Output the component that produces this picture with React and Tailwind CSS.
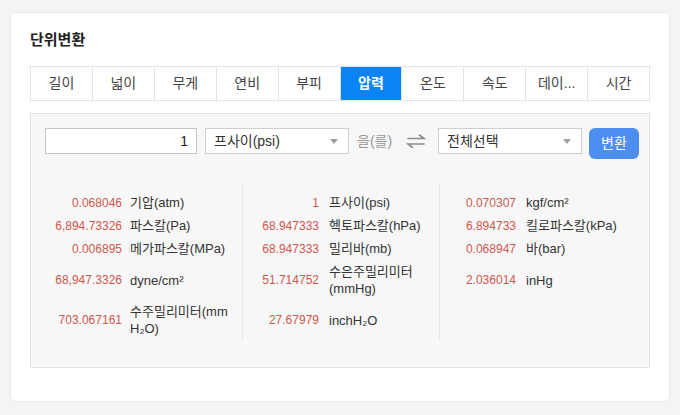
import React, { useState } from 'react';

// --- DATA ---
const TABS = ['길이', '넓이', '무게', '연비', '부피', '압력', '온도', '속도', '데이...', '시간'];

const ROW_HEIGHTS = ['h-[23px]', 'h-[23px]', 'h-[23px]', 'h-[40px]', 'h-[40px]'];

const COLUMNS = [
    [
        { value: '0.068046', label: '기압(atm)' },
        { value: '6,894.73326', label: '파스칼(Pa)' },
        { value: '0.006895', label: '메가파스칼(MPa)' },
        { value: '68,947.3326', label: 'dyne/cm²' },
        { value: '703.067161', label: '수주밀리미터(mm H₂O)' },
    ],
    [
        { value: '1', label: '프사이(psi)' },
        { value: '68.947333', label: '헥토파스칼(hPa)' },
        { value: '68.947333', label: '밀리바(mb)' },
        { value: '51.714752', label: '수은주밀리미터(mmHg)' },
        { value: '27.67979', label: 'inchH₂O' },
    ],
    [
        { value: '0.070307', label: 'kgf/cm²' },
        { value: '6.894733', label: '킬로파스칼(kPa)' },
        { value: '0.068947', label: '바(bar)' },
        { value: '2.036014', label: 'inHg' },
    ],
];

// --- HELPER COMPONENTS ---
const Caret = () => (
    <svg width="8" height="5" viewBox="0 0 8 5" className="shrink-0">
        <path d="M0 0h8L4 5z" fill="#a0a0a0" />
    </svg>
);

const SelectBox = ({ label }) => (
    <div className="w-[144px] h-[26px] shrink-0 bg-white border border-[#cfcfcf] flex items-center justify-between pl-2 pr-2.5 text-[14px] text-[#333]">
        <span>{label}</span>
        <Caret />
    </div>
);

const SwapIcon = () => (
    <svg width="20" height="14" viewBox="0 0 20 14" fill="none" stroke="#8a8a8a" strokeWidth="1.6" strokeLinecap="round">
        <path d="M2 4.5h16L13.5 1" />
        <path d="M18 10H2l4.5 3.5" />
    </svg>
);

const ResultColumn = ({ items, divider }) => (
    <div className={`flex flex-col pt-2 ${divider ? 'border-l border-[#e6e6e6]' : ''} ${divider === 'last' ? 'flex-1' : 'w-[197px]'}`}>
        {ROW_HEIGHTS.map((h, i) => {
            const item = items[i];
            return (
                <div key={i} className={`flex items-center ${h}`}>
                    {item && (
                        <>
                            <span className={`${divider ? 'w-[76px]' : 'w-[77px]'} shrink-0 text-right text-[12px] text-[#d0574e]`}>
                                {item.value}
                            </span>
                            <span className={`flex-1 ${divider ? 'pl-2.5' : 'pl-2'} pr-2 text-[13px] leading-[17px] text-[#333]`}>
                                {item.label}
                            </span>
                        </>
                    )}
                </div>
            );
        })}
    </div>
);

// --- MAIN ---
const App = () => {
    const [active, setActive] = useState(5);

    return (
        <div
            className="w-[692px] h-[415px] bg-white overflow-hidden"
            style={{ fontFamily: '"Liberation Sans", "Noto Sans CJK KR", Arial, sans-serif' }}
        >
            <div className="w-[680px] h-full bg-[#f3f4f6] pt-3 pl-[10px]">
                {/* Card */}
                <div className="w-[660px] h-[390px] bg-white border border-[#e9e9e9] rounded-md px-[19px] pt-[17px]">
                    <h2 className="text-[15px] leading-5 font-bold text-[#222] mb-4">단위변환</h2>

                    {/* Tabs */}
                    <div className="flex border-l border-t border-[#e3e3e3]">
                        {TABS.map((t, i) => (
                            <button
                                key={t}
                                onClick={() => setActive(i)}
                                className={`w-[62px] h-[34px] border-r border-b border-[#e3e3e3] text-[14px] flex items-center justify-center ${
                                    active === i ? 'bg-[#0a84f5] text-white font-bold border-[#0a84f5]' : 'bg-white text-[#444]'
                                }`}
                            >
                                {t}
                            </button>
                        ))}
                    </div>

                    {/* Converter panel */}
                    <div className="mt-[12px] h-[255px] bg-[#f7f7f7] border border-[#e3e3e3] px-[14px] pt-[14px]">
                        <div className="flex items-start whitespace-nowrap">
                            <div className="w-[152px] h-[26px] shrink-0 bg-white border border-[#c4c4c4] flex items-center justify-end pr-2 text-[14px] text-[#222]">
                                1
                            </div>
                            <div className="ml-2 shrink-0">
                                <SelectBox label="프사이(psi)" />
                            </div>
                            <span className="ml-2 w-[38px] shrink-0 h-[26px] flex items-center text-[14px] text-[#999]">을(를)</span>
                            <span className="ml-[11px] shrink-0 h-[26px] flex items-center">
                                <SwapIcon />
                            </span>
                            <div className="ml-3 shrink-0">
                                <SelectBox label="전체선택" />
                            </div>
                            <button className="ml-[7px] shrink-0 w-[50px] h-[31px] rounded-md bg-[#4d8ef0] text-white text-[14px] flex items-center justify-center">
                                변환
                            </button>
                        </div>

                        {/* Results */}
                        <div className="flex mt-6">
                            <ResultColumn items={COLUMNS[0]} />
                            <ResultColumn items={COLUMNS[1]} divider="mid" />
                            <ResultColumn items={COLUMNS[2]} divider="last" />
                        </div>
                    </div>
                </div>
            </div>
        </div>
    );
};

export default App;
